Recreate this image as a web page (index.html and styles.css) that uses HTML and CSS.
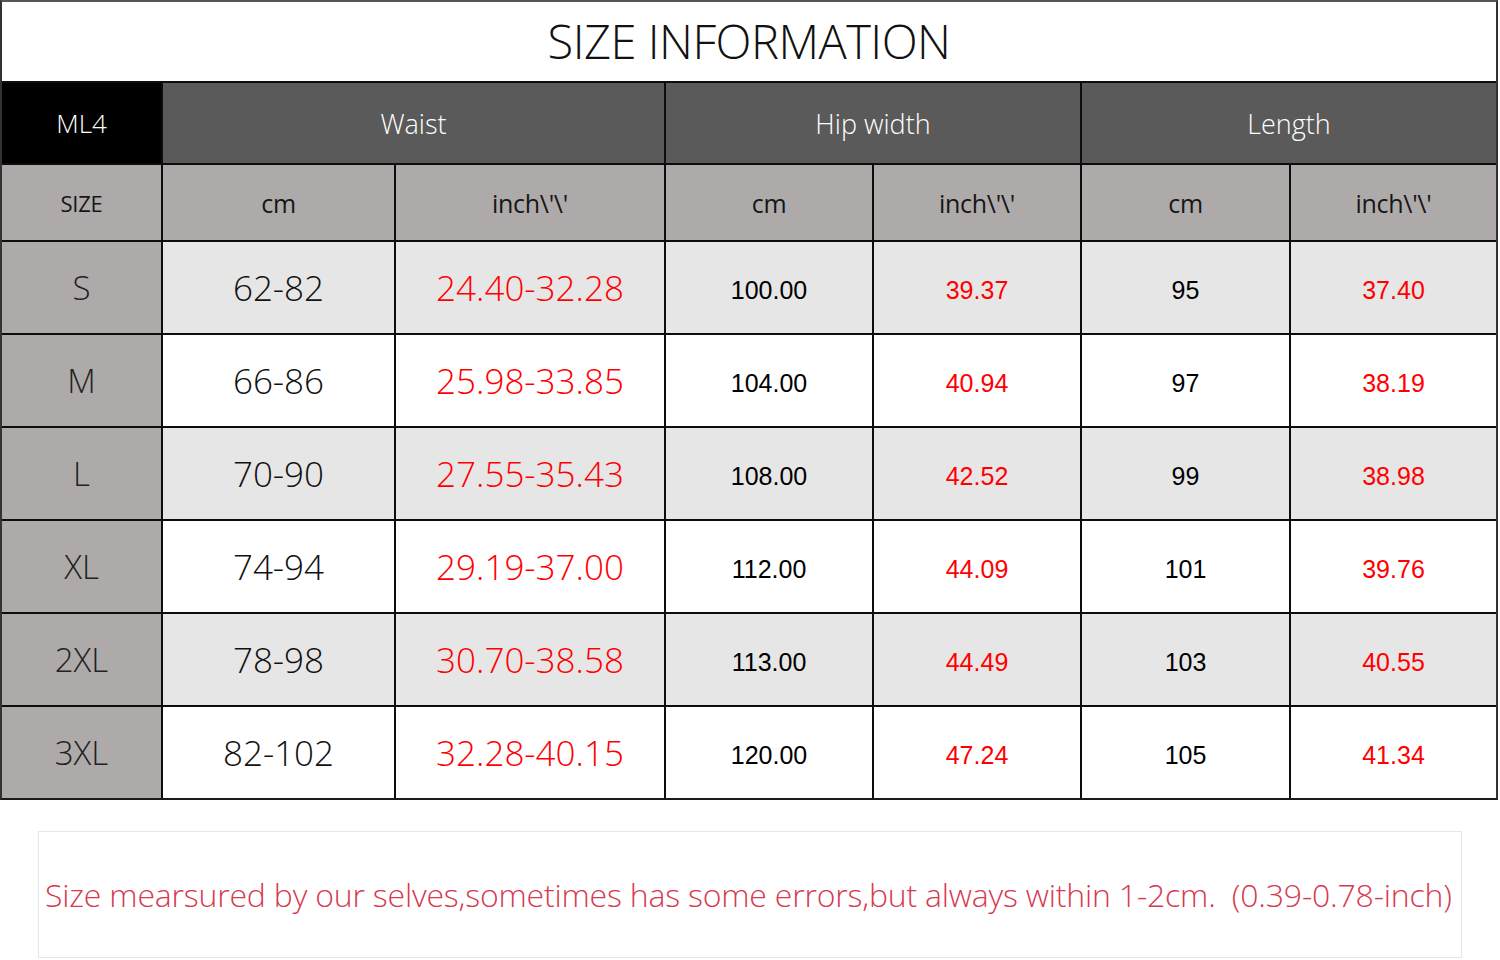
FILE: index.html
```html
<!DOCTYPE html>
<html lang="en">
<head>
<meta charset="utf-8">
<title>Size Information</title>
<link rel="stylesheet" href="styles.css">
</head>
<body>
<div class="chart">
  <div class="title">SIZE INFORMATION</div>

  <div class="cell code">ML4</div>
  <div class="cell group span2">Waist</div>
  <div class="cell group span2">Hip width</div>
  <div class="cell group span2">Length</div>

  <div class="cell sub size-h">SIZE</div>
  <div class="cell sub">cm</div>
  <div class="cell sub">inch\'\'</div>
  <div class="cell sub">cm</div>
  <div class="cell sub">inch\'\'</div>
  <div class="cell sub">cm</div>
  <div class="cell sub">inch\'\'</div>

  <div class="cell size">S</div>
  <div class="cell alt big">62-82</div>
  <div class="cell alt big red">24.40-32.28</div>
  <div class="cell alt num">100.00</div>
  <div class="cell alt num red">39.37</div>
  <div class="cell alt num">95</div>
  <div class="cell alt num red">37.40</div>

  <div class="cell size">M</div>
  <div class="cell big">66-86</div>
  <div class="cell big red">25.98-33.85</div>
  <div class="cell num">104.00</div>
  <div class="cell num red">40.94</div>
  <div class="cell num">97</div>
  <div class="cell num red">38.19</div>

  <div class="cell size">L</div>
  <div class="cell alt big">70-90</div>
  <div class="cell alt big red">27.55-35.43</div>
  <div class="cell alt num">108.00</div>
  <div class="cell alt num red">42.52</div>
  <div class="cell alt num">99</div>
  <div class="cell alt num red">38.98</div>

  <div class="cell size">XL</div>
  <div class="cell big">74-94</div>
  <div class="cell big red">29.19-37.00</div>
  <div class="cell num">112.00</div>
  <div class="cell num red">44.09</div>
  <div class="cell num">101</div>
  <div class="cell num red">39.76</div>

  <div class="cell size">2XL</div>
  <div class="cell alt big">78-98</div>
  <div class="cell alt big red">30.70-38.58</div>
  <div class="cell alt num">113.00</div>
  <div class="cell alt num red">44.49</div>
  <div class="cell alt num">103</div>
  <div class="cell alt num red">40.55</div>

  <div class="cell size">3XL</div>
  <div class="cell big">82-102</div>
  <div class="cell big red">32.28-40.15</div>
  <div class="cell num">120.00</div>
  <div class="cell num red">47.24</div>
  <div class="cell num">105</div>
  <div class="cell num red">41.34</div>
</div>

<div class="note">Size mearsured by our selves,sometimes has some errors,but always within 1-2cm.&nbsp; (0.39-0.78-inch)</div>
</body>
</html>
```

FILE: styles.css
```css
html, body {
  margin: 0;
  padding: 0;
  background: #ffffff;
}

body {
  width: 1500px;
  font-family: "Open Sans", "Noto Sans", sans-serif;
}

.chart {
  width: 1498px;
  box-sizing: border-box;
  display: grid;
  grid-template-columns: 159px 231px 268px 206px 206px 207px 205px;
  grid-template-rows: 79px 80px 75px repeat(6, 91px);
  gap: 2px;
  background: #0d0d0d;
  border: 2px solid #1a1a1a;
  border-top-color: #555555;
  border-left-color: #333333;
  border-right-color: #333333;
}

.title {
  grid-column: 1 / -1;
  background: #ffffff;
  display: flex;
  align-items: center;
  justify-content: center;
  padding-bottom: 2px;
  font-weight: 300;
  font-size: 47px;
  color: #111111;
  letter-spacing: -0.5px;
}

.cell {
  display: flex;
  align-items: center;
  justify-content: center;
  background: #ffffff;
  color: #111111;
}

.span2 {
  grid-column: span 2;
}

.code {
  background: #000000;
  color: #ffffff;
  font-weight: 300;
  font-size: 26px;
}

.group {
  background: #5a5a5a;
  color: #ffffff;
  font-weight: 300;
  font-size: 27px;
}

.sub {
  background: #aeaaaa;
  color: #161616;
  font-weight: 400;
  font-size: 25px;
  letter-spacing: -0.3px;
}

.size-h {
  font-size: 22px;
}

.size {
  background: #aeaaaa;
  color: #222222;
  font-weight: 300;
  font-size: 33px;
}

.alt {
  background: #e7e6e6;
}

.big {
  font-weight: 300;
  font-size: 35px;
  color: #111111;
}

.num {
  font-family: "Liberation Sans", Arial, sans-serif;
  font-size: 25px;
  color: #000000;
  padding-top: 5px;
}

.red {
  color: #ff0000;
}

.note {
  box-sizing: border-box;
  width: 1424px;
  height: 127px;
  margin: 31px 0 0 38px;
  border: 1px solid #e6e6e6;
  display: flex;
  align-items: center;
  padding: 0 0 0 6px;
  font-weight: 300;
  font-size: 32px;
  letter-spacing: -0.2px;
  color: #d63a4f;
  white-space: nowrap;
}
```
